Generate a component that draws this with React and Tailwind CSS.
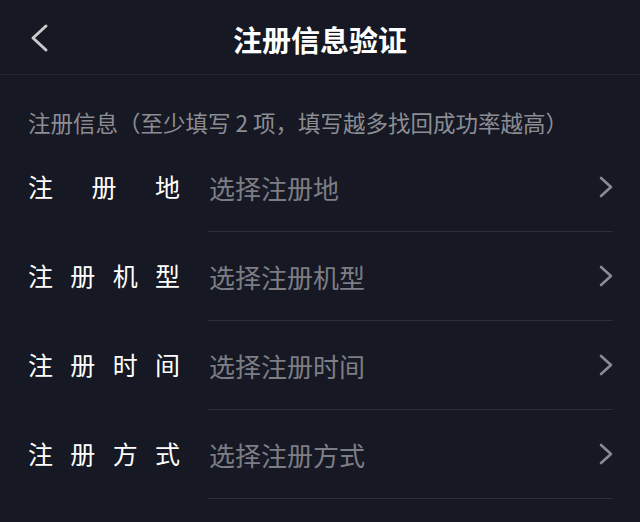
import React from "react";

const rows = [
  { label: ["注", "册", "地"], value: "选择注册地" },
  { label: ["注", "册", "机", "型"], value: "选择注册机型" },
  { label: ["注", "册", "时", "间"], value: "选择注册时间" },
  { label: ["注", "册", "方", "式"], value: "选择注册方式" },
];

function ChevronRight() {
  return (
    <svg width="14" height="22" viewBox="0 0 14 22" fill="none">
      <polyline points="2,2 12,11 2,20" stroke="#8a8b91" strokeWidth="2.6" strokeLinecap="round" strokeLinejoin="round" />
    </svg>
  );
}

export default function App() {
  return (
    <div
      className="w-[640px] h-[522px] bg-[#161823] overflow-hidden"
      style={{ fontFamily: '"Noto Sans CJK SC", "Noto Sans", sans-serif' }}
    >
      <div className="relative h-[75px] flex items-center justify-center border-b border-[#23252f]">
        <div className="absolute left-[29px] top-[23px]">
          <svg width="22" height="30" viewBox="0 0 22 30" fill="none">
            <polyline points="17,3 4,15 17,27" stroke="#c9cacd" strokeWidth="3" strokeLinecap="round" strokeLinejoin="round" />
          </svg>
        </div>
        <div className="text-[29px] font-bold text-white leading-none pt-[4px]">注册信息验证</div>
      </div>
      <div className="h-[68px] pl-[28px] pt-[31px] text-[22.5px] leading-[32px] text-[#8c8d93]">
        注册信息（至少填写 2 项，填写越多找回成功率越高）
      </div>
      {rows.map((r, i) => (
        <div key={i} className="flex h-[89px] pl-[28px] pr-[27px]">
          <div className="w-[152px] flex items-center justify-between text-[25px] text-white pb-[1px]">
            {r.label.map((c, j) => (
              <span key={j}>{c}</span>
            ))}
          </div>
          <div className="flex-1 ml-[28px] flex items-center justify-between border-b border-[#2b2d37]">
            <span className="text-[26px] text-[#7d7e85] pl-[1px]">{r.value}</span>
            <ChevronRight />
          </div>
        </div>
      ))}
    </div>
  );
}
